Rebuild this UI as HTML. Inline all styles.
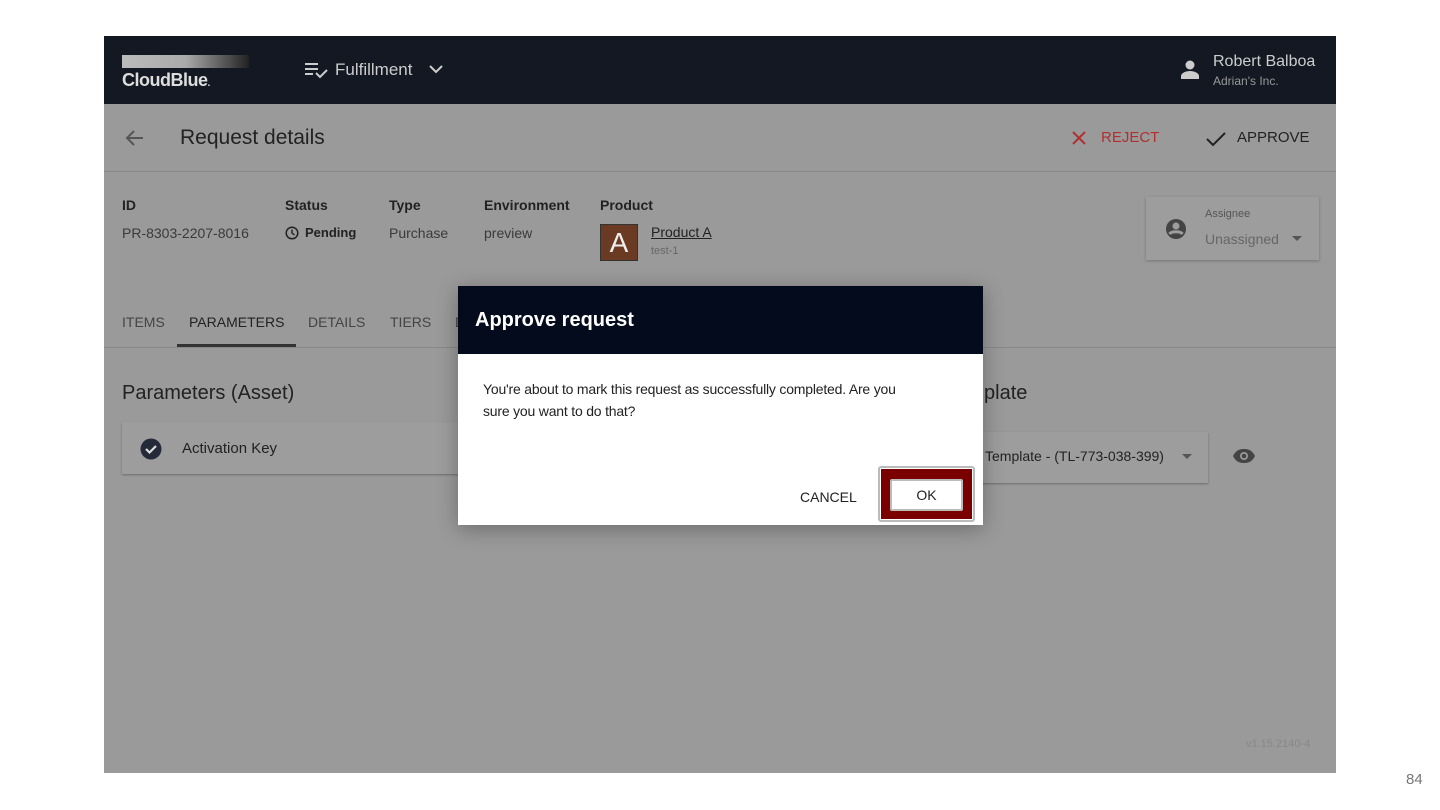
<!DOCTYPE html>
<html><head><meta charset="utf-8">
<style>
*{box-sizing:border-box;margin:0;padding:0}
body{width:1440px;height:810px;background:#fff;font-family:"Liberation Sans",sans-serif;position:relative;overflow:hidden}
.app{position:absolute;left:104px;top:36px;width:1232px;height:737px;background:#9a9a9a;overflow:hidden}
.hdr{position:absolute;left:0;top:0;width:1232px;height:68px;background:#141822}
.a{position:absolute;white-space:nowrap}
.lbl{font-size:14px;color:#222;font-weight:bold}
.val{font-size:14px;color:#3a3a3a}
.dlg{position:absolute;left:458px;top:286px;width:525px;height:239px;background:#fff;box-shadow:0 4px 20px rgba(0,0,0,.3)}
.dh{height:68px;background:#030b1c;color:#fff;font-size:20px;font-weight:bold;padding:23px 17px}
</style></head><body>
<div class="app">
 <div class="hdr">
  <div class="a" style="left:18px;top:19px;width:127px;height:13px;background:linear-gradient(90deg,#bbb 0%,#aaa 50%,#222 100%)"></div>
  <div class="a" style="left:18px;top:34px;color:#ddd;font-size:18px;font-weight:bold;letter-spacing:-0.5px">CloudBlue<span style="font-size:10px">.</span></div>
  <svg class="a" style="left:200px;top:25px" width="24" height="18" viewBox="0 0 24 18"><path d="M1 3h13M1 8h13M1 13h8M12 12l4 4 7-7" stroke="#ccc" stroke-width="2" fill="none"/></svg>
  <div class="a" style="left:231px;top:24px;color:#ccc;font-size:17px">Fulfillment</div>
  <svg class="a" style="left:325px;top:28px" width="14" height="10" viewBox="0 0 14 10"><path d="M1 2l6 6 6-6" stroke="#ccc" stroke-width="2" fill="none"/></svg>
  <svg class="a" style="left:1076px;top:22px" width="20" height="22" viewBox="0 0 20 22"><circle cx="10" cy="7" r="4.5" fill="#ccc"/><path d="M1 21v-3c0-3 5-5 9-5s9 2 9 5v3z" fill="#ccc"/></svg>
  <div class="a" style="left:1109px;top:17px;color:#ccc;font-size:16px">Robert Balboa</div>
  <div class="a" style="left:1109px;top:38px;color:#999;font-size:12px">Adrian's Inc.</div>
 </div>
 <div class="a" style="left:0;top:135px;width:1232px;height:1px;background:#888"></div>
 <svg class="a" style="left:20px;top:93px" width="20" height="18" viewBox="0 0 20 18"><path d="M19 9H3M10 2L3 9l7 7" stroke="#555" stroke-width="2" fill="none"/></svg>
 <div class="a" style="left:76px;top:90px;font-size:21px;color:#222">Request details</div>
 <svg class="a" style="left:968px;top:95px" width="14" height="14" viewBox="0 0 14 14"><path d="M1 1l12 12M13 1L1 13" stroke="#b03030" stroke-width="2"/></svg>
 <div class="a" style="left:997px;top:93px;font-size:15px;color:#b03030">REJECT</div>
 <svg class="a" style="left:1102px;top:95px" width="20" height="16" viewBox="0 0 20 16"><path d="M1 8l6 6L19 2" stroke="#222" stroke-width="2" fill="none"/></svg>
 <div class="a" style="left:1133px;top:93px;font-size:15px;color:#222">APPROVE</div>

 <div class="a lbl" style="left:18px;top:161px">ID</div>
 <div class="a val" style="left:18px;top:189px">PR-8303-2207-8016</div>
 <div class="a lbl" style="left:181px;top:161px">Status</div>
 <svg class="a" style="left:181px;top:190px" width="14" height="14" viewBox="0 0 14 14"><circle cx="7" cy="7" r="5.8" stroke="#222" stroke-width="1.5" fill="none"/><path d="M7 3.5V7l2.5 2" stroke="#222" stroke-width="1.4" fill="none"/></svg>
 <div class="a" style="left:201px;top:189px;font-size:13px;font-weight:bold;color:#222">Pending</div>
 <div class="a lbl" style="left:285px;top:161px">Type</div>
 <div class="a val" style="left:285px;top:189px">Purchase</div>
 <div class="a lbl" style="left:380px;top:161px">Environment</div>
 <div class="a val" style="left:380px;top:189px">preview</div>
 <div class="a lbl" style="left:496px;top:161px">Product</div>
 <div class="a" style="left:496px;top:188px;width:38px;height:37px;background:#6a3a22;border:1px solid #333;color:#eee;font-size:28px;text-align:center;line-height:36px">A</div>
 <div class="a" style="left:547px;top:188px;font-size:14px;color:#222;text-decoration:underline">Product A</div>
 <div class="a" style="left:547px;top:209px;font-size:11px;color:#666">test-1</div>
 <div class="a" style="left:1042px;top:161px;width:173px;height:63px;background:#9d9d9d;box-shadow:0 1px 3px rgba(0,0,0,.25)"></div>
 <svg class="a" style="left:1061px;top:182px" width="22" height="22" viewBox="0 0 22 22"><circle cx="11" cy="11" r="10" fill="#444"/><circle cx="11" cy="8" r="3.5" fill="#9d9d9d"/><path d="M4.5 16c2-3 11-3 13 0" stroke="#9d9d9d" stroke-width="3" fill="none"/></svg>
 <div class="a" style="left:1101px;top:172px;font-size:11px;color:#555">Assignee</div>
 <div class="a" style="left:1101px;top:195px;font-size:14px;color:#666">Unassigned</div>
 <svg class="a" style="left:1188px;top:200px" width="10" height="6"><path d="M0 0h10L5 5z" fill="#555"/></svg>

 <div class="a" style="left:18px;top:278px;font-size:14px;color:#444">ITEMS</div>
 <div class="a" style="left:85px;top:278px;font-size:14px;color:#222">PARAMETERS</div>
 <div class="a" style="left:204px;top:278px;font-size:14px;color:#444">DETAILS</div>
 <div class="a" style="left:286px;top:278px;font-size:14px;color:#444">TIERS</div>
 <div class="a" style="left:351px;top:278px;font-size:14px;color:#444">D</div>
 <div class="a" style="left:73px;top:308px;width:119px;height:3px;background:#333"></div>
 <div class="a" style="left:0;top:311px;width:1232px;height:1px;background:#888"></div>

 <div class="a" style="left:18px;top:346px;font-size:20px;color:#222">Parameters (Asset)</div>
 <div class="a" style="left:18px;top:386px;width:360px;height:52px;background:#9d9d9d;box-shadow:0 1px 2px rgba(0,0,0,.3)"></div>
 <svg class="a" style="left:36px;top:402px" width="22" height="22" viewBox="0 0 22 22"><circle cx="11" cy="11" r="10.5" fill="#252a3a"/><path d="M6 11l3.5 3.5L16 8" stroke="#ddd" stroke-width="2.2" fill="none"/></svg>
 <div class="a" style="left:78px;top:404px;font-size:15px;color:#222">Activation Key</div>

 <div class="a" style="left:880px;top:346px;font-size:20px;color:#222">plate</div>
 <div class="a" style="left:860px;top:396px;width:244px;height:51px;background:#9d9d9d;box-shadow:0 1px 2px rgba(0,0,0,.3)"></div>
 <div class="a" style="left:881px;top:412px;font-size:14px;color:#222">Template - (TL-773-038-399)</div>
 <svg class="a" style="left:1078px;top:418px" width="10" height="6"><path d="M0 0h10L5 5z" fill="#555"/></svg>
 <svg class="a" style="left:1128px;top:412px" width="24" height="16" viewBox="0 0 24 16"><path d="M1 8C4 2 8 1 12 1s8 1 11 7c-3 6-7 7-11 7S4 14 1 8z" fill="#444"/><circle cx="12" cy="8" r="4" fill="#9a9a9a"/><circle cx="12" cy="8" r="2.3" fill="#444"/></svg>

 <div class="a" style="left:1142px;top:702px;font-size:11px;color:#888">v1.15.2140-4</div>
</div>

<div class="dlg">
 <div class="dh">Approve request</div>
 <div style="padding:24px 60px 0 25px;font-size:14px;line-height:22px;color:#222;letter-spacing:-0.2px">You're about to mark this request as successfully completed. Are you sure you want to do that?</div>
 <div class="a" style="left:342px;top:203px;font-size:14px;color:#222">CANCEL</div>
 <div class="a" style="left:420px;top:180px;width:97px;height:56px;border:2px solid #bbb;border-radius:3px"></div>
 <div class="a" style="left:423px;top:183px;width:91px;height:50px;background:#7a0000"></div>
 <div class="a" style="left:432px;top:193px;width:73px;height:32px;background:#fff;border:2px solid #bbb;border-radius:2px;font-size:14px;color:#222;text-align:center;line-height:28px">OK</div>
</div>
<div class="a" style="left:1406px;top:771px;font-size:15px;color:#777">84</div>
</body></html>
